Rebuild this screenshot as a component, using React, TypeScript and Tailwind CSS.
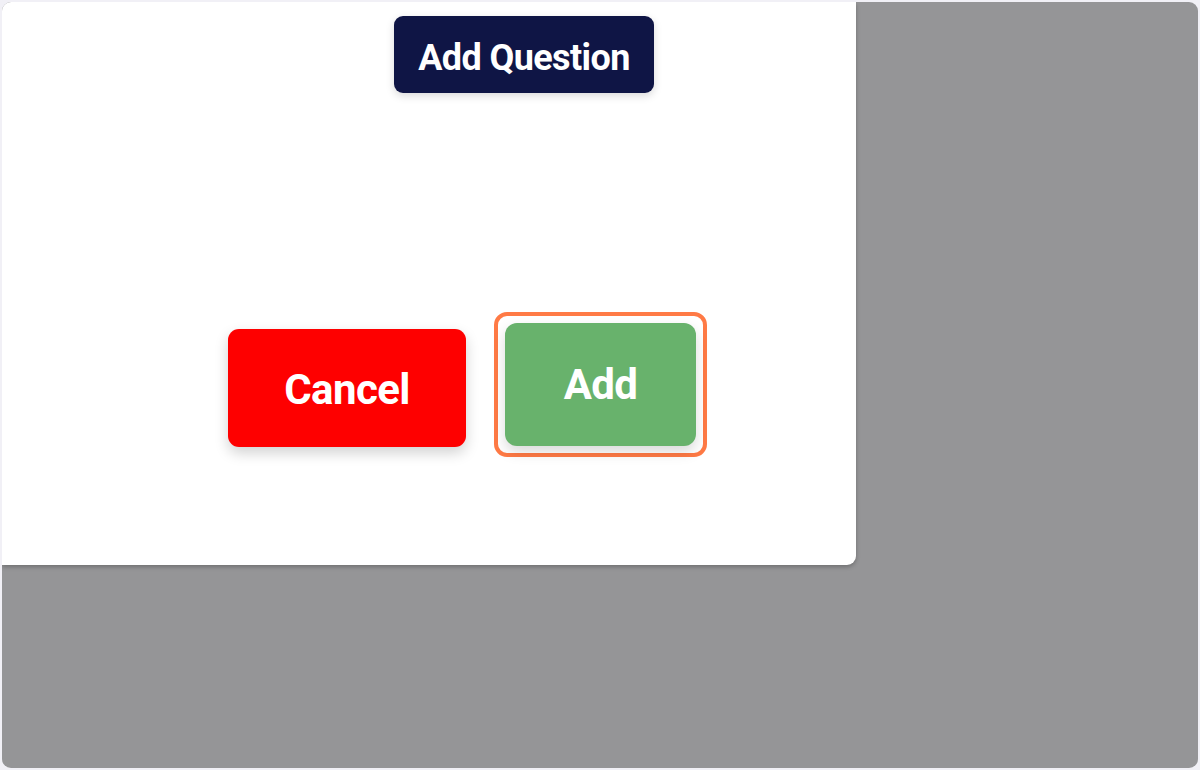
import React from "react";

export default function App() {
  return (
    <div
      className="w-[1200px] h-[770px] bg-[#f1f0f6] p-[2px]"
      style={{ fontFamily: "Roboto, 'Liberation Sans', Arial, sans-serif" }}
    >
      <div className="w-full h-full rounded-[9px] overflow-hidden bg-[#959597]">
        <div className="w-[854px] h-[563px] bg-white rounded-br-[9px] shadow-[0_2px_4px_rgba(0,0,0,0.25)] flex flex-col items-start">
          <div className="ml-[392px] mt-[14px]">
            <button className="w-[260px] h-[77px] pt-[6px] rounded-[9px] bg-[#0f1545] text-white font-bold text-[36px] tracking-[-0.6px] leading-none flex items-center justify-center shadow-[0_3px_8px_rgba(0,0,0,0.15)]">
              Add Question
            </button>
          </div>
          <div className="ml-[226px] mt-[219px] flex items-center gap-[28px]">
            <button className="w-[238px] h-[118px] mt-[7px] pt-[4px] rounded-[11px] bg-[#fe0000] text-white font-bold text-[42px] tracking-[-0.6px] leading-none flex items-center justify-center shadow-[0_6px_14px_rgba(0,0,0,0.18)]">
              Cancel
            </button>
            <div className="w-[213px] h-[145px] rounded-[13px] border-4 border-[#ff7a45] p-[7px] flex">
              <button className="w-full h-full rounded-[12px] bg-[#68b26c] text-white font-bold text-[42px] tracking-[-0.6px] leading-none flex items-center justify-center shadow-[0_6px_14px_rgba(0,0,0,0.15)]">
                Add
              </button>
            </div>
          </div>
        </div>
      </div>
    </div>
  );
}
